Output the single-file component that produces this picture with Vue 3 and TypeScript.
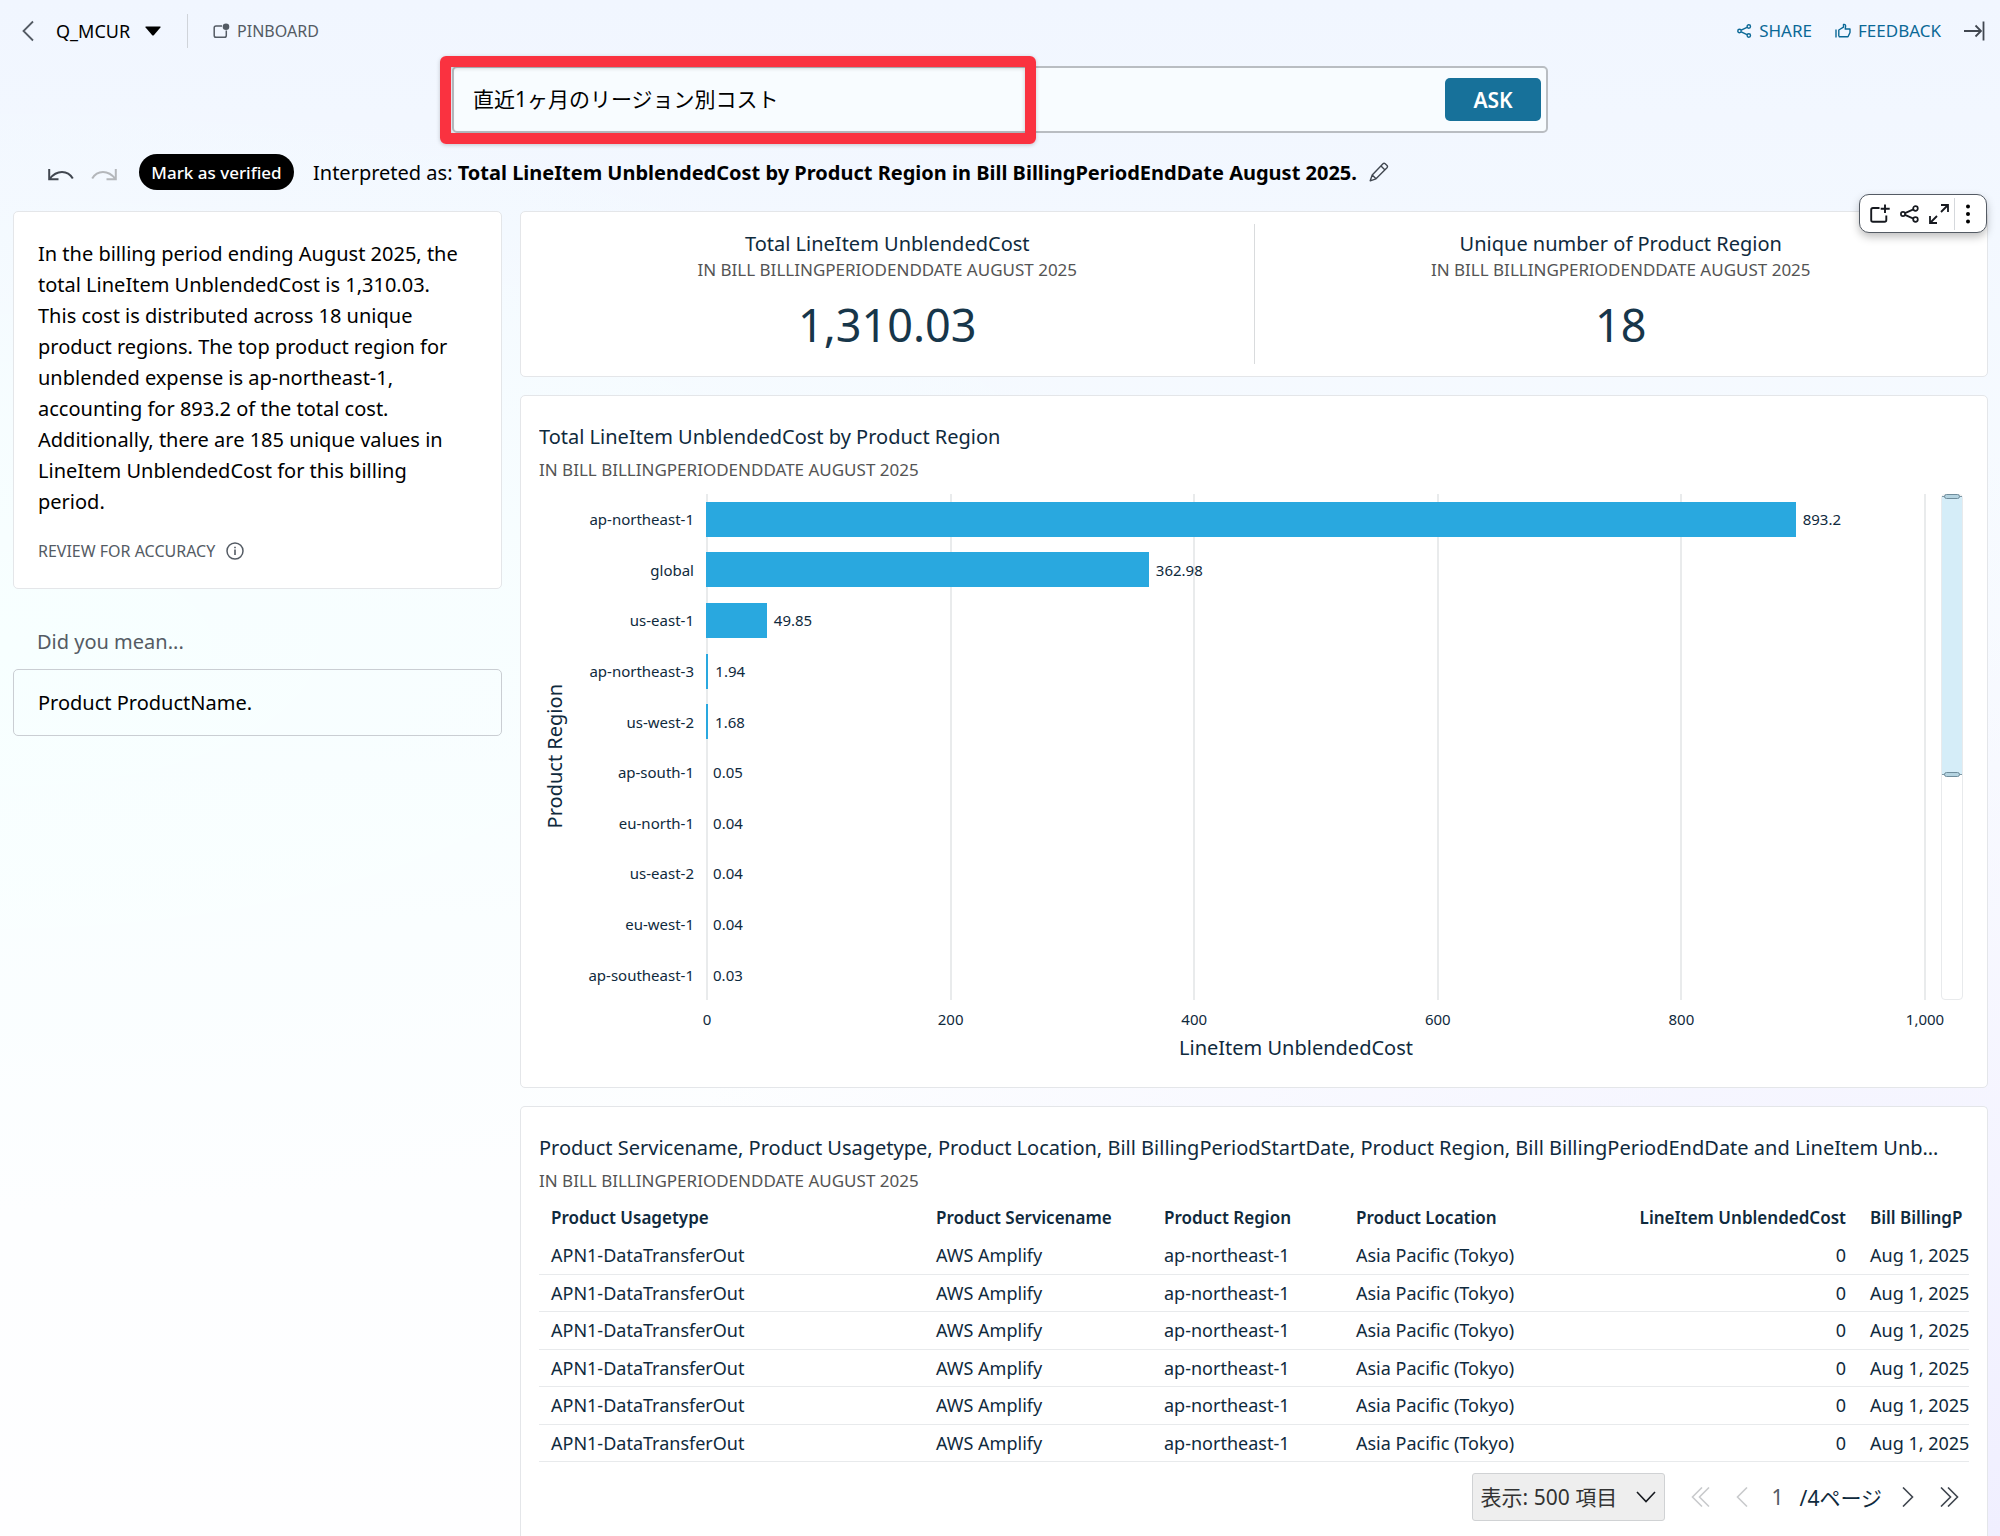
<script setup lang="ts">
import { ref } from 'vue'

interface Bar {
  region: string
  value: number
}

interface UsageRow {
  id: number
  usageType: string
  service: string
  region: string
  location: string
  cost: string
  start: string
}

const question = ref('直近1ヶ月のリージョン別コスト')
const pageSize = ref('500')
const period = 'IN BILL BILLINGPERIODENDDATE AUGUST 2025'

const kpis = [
  { title: 'Total LineItem UnblendedCost', value: '1,310.03' },
  { title: 'Unique number of Product Region', value: '18' },
]

const bars: Bar[] = [
  { region: 'ap-northeast-1', value: 893.2 },
  { region: 'global', value: 362.98 },
  { region: 'us-east-1', value: 49.85 },
  { region: 'ap-northeast-3', value: 1.94 },
  { region: 'us-west-2', value: 1.68 },
  { region: 'ap-south-1', value: 0.05 },
  { region: 'eu-north-1', value: 0.04 },
  { region: 'us-east-2', value: 0.04 },
  { region: 'eu-west-1', value: 0.04 },
  { region: 'ap-southeast-1', value: 0.03 },
]
const axisMax = 1000
const ticks = ['0', '200', '400', '600', '800', '1,000']

const rows: UsageRow[] = Array.from({ length: 6 }, (_, id) => ({
  id,
  usageType: 'APN1-DataTransferOut',
  service: 'AWS Amplify',
  region: 'ap-northeast-1',
  location: 'Asia Pacific (Tokyo)',
  cost: '0',
  start: 'Aug 1, 2025',
}))

const barWidth = (value: number): string => `${(value / axisMax) * 100}%`
</script>

<template>
  <div class="page">
    <header class="topbar">
      <button class="icon-btn back" type="button" aria-label="Back">
        <svg width="12" height="22" viewBox="0 0 12 22"><path d="M11 1.500 1.500 11 11 20.500" fill="none" stroke="#545b64" stroke-width="1.800" /></svg>
      </button>
      <button class="topic" type="button">
        Q_MCUR
        <svg width="16" height="10" viewBox="0 0 16 10"><path d="M1 .5h14q1 .2.400 1L9 9q-1 1-2 0L.6 1.500Q0 .7 1 .5z" fill="#000" /></svg>
      </button>
      <span class="divider"></span>
      <button class="pinboard" type="button">
        <svg width="17" height="16" viewBox="0 0 17 16">
          <path d="M9 3H3Q1.200 3 1.200 4.800v7.700q0 1.800 1.800 1.800h8.500q1.800 0 1.800-1.800V7.500" fill="none" stroke="#545b64" stroke-width="1.500" />
          <circle cx="13" cy="3.700" r="3.300" fill="#545b64" />
        </svg>
        PINBOARD
      </button>
      <nav class="actions">
        <a href="#share">
          <svg width="15" height="14" viewBox="0 0 15 14" fill="none" stroke="#0a6896" stroke-width="1.400">
            <circle cx="2.500" cy="7" r="1.700" /><circle cx="11.800" cy="2.500" r="1.700" /><circle cx="11.800" cy="11.500" r="1.700" />
            <path d="M4.200 6.200 10 3.300M4.200 7.800l5.800 2.900" />
          </svg>
          SHARE
        </a>
        <a href="#feedback">
          <svg width="16" height="15" viewBox="0 0 16 15" fill="none" stroke="#0a6896" stroke-width="1.400">
            <path d="M1 6.500v8M3.800 13.500V7L8.500 4.200V1.500Q10.800 1 10.600 3.500L10.200 6H15v3.500l-2 4.200H3.800" stroke-linejoin="round" />
          </svg>
          FEEDBACK
        </a>
        <button class="icon-btn" type="button" aria-label="Collapse panel">
          <svg width="21" height="20" viewBox="0 0 21 20" fill="none" stroke="#414750" stroke-width="1.800"><path d="M0 10h17M11.500 4.500 17 10l-5.500 5.500M19.500 .5v19" /></svg>
        </button>
      </nav>
    </header>

    <form class="search" @submit.prevent>
      <input v-model="question" type="text" aria-label="Ask a question" />
      <button class="ask" type="submit">ASK</button>
      <span class="highlight"></span>
    </form>

    <section class="interpreted">
      <button class="icon-btn undo" type="button" aria-label="Undo">
        <svg width="26" height="12" viewBox="0 0 26 12" fill="none" stroke="#414750" stroke-width="2"><path d="M1.200 0v10.300H10.500M1.500 10Q7 3 14 3 21 3 24.800 9.500" /></svg>
      </button>
      <button class="icon-btn redo" type="button" aria-label="Redo" disabled>
        <svg width="26" height="12" viewBox="0 0 26 12" fill="none" stroke="#b4b7bb" stroke-width="2"><path d="M24.800 0v10.300H15.500M24.500 10Q19 3 12 3 5 3 1.200 9.500" /></svg>
      </button>
      <button class="verify" type="button">Mark as verified</button>
      <p>Interpreted as: <b>Total LineItem UnblendedCost by Product Region in Bill BillingPeriodEndDate August 2025.</b></p>
      <button class="icon-btn edit" type="button" aria-label="Edit interpretation">
        <svg width="20" height="20" viewBox="0 0 20 20" fill="none" stroke="#414750" stroke-width="1.400" stroke-linejoin="round"><path d="M1.200 18.800 3.200 13 14 1.800Q15 .8 16.200 1.800L18 3.500Q19 4.600 18 5.800L7 16.800zM3.200 13 7 16.800M12 4l4 4" /></svg>
      </button>
    </section>

    <div class="content">
      <aside class="side">
        <article class="card summary">
          <p>In the billing period ending August 2025, the total LineItem UnblendedCost is 1,310.03. This cost is distributed across 18 unique product regions. The top product region for unblended expense is ap-northeast-1, accounting for 893.2 of the total cost. Additionally, there are 185 unique values in LineItem UnblendedCost for this billing period.</p>
          <div class="review">
            REVIEW FOR ACCURACY
            <svg width="18" height="18" viewBox="0 0 18 18"><circle cx="9" cy="9" r="8" fill="none" stroke="#545b64" stroke-width="1.500" /><path d="M9 7.500V13M9 4.800v1.500" stroke="#545b64" stroke-width="1.600" /></svg>
          </div>
        </article>
        <h2>Did you mean...</h2>
        <button class="suggestion" type="button">Product ProductName.</button>
      </aside>

      <main class="main">
        <section class="card kpis">
          <div v-for="kpi in kpis" :key="kpi.title" class="kpi">
            <h3>{{ kpi.title }}</h3>
            <p class="period">{{ period }}</p>
            <strong>{{ kpi.value }}</strong>
          </div>
          <div class="toolbar">
            <button class="icon-btn" type="button" aria-label="Add to pinboard">
              <svg width="20" height="20" viewBox="0 0 20 20" fill="none" stroke="#16191f" stroke-width="1.900"><path d="M9.500 4H3Q1.200 4 1.200 5.800V16q0 1.800 1.800 1.800h11.500q1.800 0 1.800-1.800v-4.500M15 .5v8.500M10.700 4.800h9" /></svg>
            </button>
            <button class="icon-btn" type="button" aria-label="Share visual">
              <svg width="19" height="18" viewBox="0 0 19 18" fill="none" stroke="#16191f" stroke-width="1.700">
                <circle cx="3" cy="9" r="2.100" /><circle cx="15.500" cy="3.500" r="2.300" /><circle cx="15.500" cy="14.500" r="2.300" /><path d="m5 8.100 8.400-3.700M5 9.900l8.400 3.700" />
              </svg>
            </button>
            <button class="icon-btn" type="button" aria-label="Expand visual">
              <svg width="20" height="20" viewBox="0 0 20 20" fill="none" stroke="#16191f" stroke-width="1.800"><path d="M12 8l7-7M12 1h7v7M8 12l-7 7M1 12v7h7" /></svg>
            </button>
            <span class="tool-divider"></span>
            <button class="icon-btn" type="button" aria-label="More options">
              <svg width="6" height="20" viewBox="0 0 6 20"><circle cx="3" cy="2.500" r="2" /><circle cx="3" cy="10" r="2" /><circle cx="3" cy="17.500" r="2" /></svg>
            </button>
          </div>
        </section>

        <section class="card panel chart-card">
          <h3>Total LineItem UnblendedCost by Product Region</h3>
          <p class="period">{{ period }}</p>
          <div class="chart">
            <div class="y-title"><span>Product Region</span></div>
            <div class="labels"><span v-for="b in bars" :key="b.region">{{ b.region }}</span></div>
            <div class="gridlines"><i v-for="t in ticks" :key="t"></i></div>
            <div class="bars">
              <div v-for="b in bars" :key="b.region" class="bar-row">
                <span class="bar" :style="{ width: barWidth(b.value) }"></span>
                <span class="value">{{ b.value }}</span>
              </div>
            </div>
            <div class="scroller">
              <span class="window">
                <i class="handle"></i>
                <i class="handle"></i>
              </span>
            </div>
            <div class="ticks"><span v-for="t in ticks" :key="t">{{ t }}</span></div>
            <div class="x-title">LineItem UnblendedCost</div>
          </div>
        </section>

        <section class="card panel table-card">
          <h3>Product Servicename, Product Usagetype, Product Location, Bill BillingPeriodStartDate, Product Region, Bill BillingPeriodEndDate and LineItem Unb…</h3>
          <p class="period">{{ period }}</p>
          <table>
            <colgroup>
              <col class="c-usage" /><col class="c-service" /><col class="c-region" /><col class="c-location" /><col /><col class="c-start" />
            </colgroup>
            <thead>
              <tr>
                <th>Product Usagetype</th>
                <th>Product Servicename</th>
                <th>Product Region</th>
                <th>Product Location</th>
                <th class="num">LineItem UnblendedCost</th>
                <th>Bill BillingP</th>
              </tr>
            </thead>
            <tbody>
              <tr v-for="r in rows" :key="r.id">
                <td>{{ r.usageType }}</td>
                <td>{{ r.service }}</td>
                <td>{{ r.region }}</td>
                <td>{{ r.location }}</td>
                <td class="num">{{ r.cost }}</td>
                <td>{{ r.start }}</td>
              </tr>
            </tbody>
          </table>
          <footer class="pager">
            <div class="select">
              <select v-model="pageSize" aria-label="表示件数">
                <option value="500">表示: 500 項目</option>
              </select>
              <svg width="20" height="12" viewBox="0 0 20 12"><path d="m1 1 9 9.500L19 1" fill="none" stroke="#16191f" stroke-width="1.600" /></svg>
            </div>
            <button class="icon-btn first" type="button" aria-label="First page" disabled>
              <svg width="19" height="20" viewBox="0 0 19 20" fill="none" stroke="#c9cbcd" stroke-width="1.600"><path d="M11 .5 1.500 10l9.500 9.500M18 .5 8.500 10l9.500 9.500" /></svg>
            </button>
            <button class="icon-btn prev" type="button" aria-label="Previous page" disabled>
              <svg width="12" height="20" viewBox="0 0 12 20" fill="none" stroke="#c9cbcd" stroke-width="1.600"><path d="M11 .5 1.500 10l9.500 9.500" /></svg>
            </button>
            <span class="current">1</span>
            <span class="total">/4ページ</span>
            <button class="icon-btn next" type="button" aria-label="Next page">
              <svg width="12" height="20" viewBox="0 0 12 20" fill="none" stroke="#414750" stroke-width="1.600"><path d="m1 .5 9.500 9.500L1 19.500" /></svg>
            </button>
            <button class="icon-btn" type="button" aria-label="Last page">
              <svg width="19" height="20" viewBox="0 0 19 20" fill="none" stroke="#414750" stroke-width="1.600"><path d="m1 .5 9.500 9.500L1 19.500M8 .5l9.500 9.500L8 19.500" /></svg>
            </button>
          </footer>
        </section>
      </main>
    </div>
  </div>
</template>

<style>
body {
  margin: 0;
  overflow: hidden;
}
</style>

<style scoped>
* {
  box-sizing: border-box;
}

.page {
  display: flex;
  flex-direction: column;
  height: 100vh;
  overflow: hidden;
  color: #000;
  font-family: "Noto Sans", "Noto Sans CJK JP", sans-serif;
  font-size: 20px;
  background:
    radial-gradient(ellipse at 0% 42%, #f7ffff 0%, rgba(247, 255, 255, 0) 45%),
    radial-gradient(ellipse at 100% 100%, #f0efff 0%, rgba(243, 242, 255, 0) 50%),
    linear-gradient(180deg, #f1f6ff 0%, #f3f8ff 15%, #f8fcff 40%, #fcfeff 60%, #fefeff 100%);
}

button,
input,
select {
  margin: 0;
  font: inherit;
  color: inherit;
}

h2,
h3,
p {
  margin: 0;
  font-weight: 400;
}

svg {
  display: block;
  flex: none;
}

.icon-btn {
  display: flex;
  padding: 0;
  border: 0;
  background: none;
}

.topbar {
  display: flex;
  flex: none;
  align-items: center;
  height: 61px;
  padding: 0 15px 0 22px;
}

.topic,
.pinboard {
  display: flex;
  align-items: center;
  padding: 0;
  border: 0;
  background: none;
}

.topic {
  gap: 15px;
  margin-left: 22px;
  font-size: 18px;
}

.divider {
  width: 1px;
  height: 34px;
  margin: 0 25px 0 26px;
  background: #d0d4da;
}

.pinboard {
  gap: 7px;
  color: #545b64;
  font-size: 16px;
}

.actions {
  display: flex;
  align-items: center;
  gap: 23px;
  margin-left: auto;
}

.actions a {
  display: flex;
  align-items: center;
  gap: 7px;
  color: #0a6896;
  font-size: 17px;
  text-decoration: none;
}

.search {
  position: relative;
  display: flex;
  flex: none;
  align-items: center;
  align-self: center;
  width: 1096px;
  max-width: 90%;
  height: 67px;
  margin-top: 5px;
  padding: 0 5px 0 19px;
  border: 2px solid #b9bdc2;
  border-radius: 5px;
  background: #f8fcff;
}

.search input {
  flex: 1;
  min-width: 0;
  padding: 0 0 4px;
  border: 0;
  outline: 0;
  background: none;
  font-size: 21px;
}

.ask {
  width: 96px;
  height: 43px;
  padding: 0;
  border: 0;
  border-radius: 5px;
  background: #17719a;
  color: #fff;
  font-weight: 600;
  font-size: 21px;
}

.highlight {
  position: absolute;
  top: -12px;
  left: -14px;
  width: 596px;
  height: 88px;
  border: 11px solid #fa3240;
  border-radius: 6px;
  box-shadow: 0 1px 4px rgba(0, 0, 0, 0.2), inset 0 1px 4px rgba(0, 0, 0, 0.2);
  pointer-events: none;
}

.interpreted {
  display: flex;
  flex: none;
  align-items: center;
  height: 78px;
  padding: 0 48px;
}

.undo,
.redo {
  margin-top: 6px;
}

.redo {
  margin-left: 17px;
}

.verify {
  width: 155px;
  height: 36px;
  margin: 0 19px 0 22px;
  padding: 0;
  border: 0;
  border-radius: 18px;
  background: #000;
  color: #fff;
  font-weight: 500;
  font-size: 17px;
}

.edit {
  margin-left: 12px;
}

.content {
  display: flex;
  flex: 1;
  gap: 18px;
  min-height: 0;
  padding: 0 12px 0 13px;
}

.side {
  flex: none;
  width: 489px;
}

.card {
  border: 1px solid #e4e6e9;
  border-radius: 5px;
  background: #fff;
}

.summary {
  height: 378px;
  padding: 26px 36px 0 24px;
}

.summary p {
  line-height: 31px;
}

.review {
  display: flex;
  align-items: center;
  gap: 11px;
  margin-top: 24px;
  color: #545b64;
  font-size: 16px;
  line-height: 20px;
}

.side h2 {
  padding: 38px 24px 13px;
  color: #545b64;
  font-size: 20px;
  line-height: 29px;
}

.suggestion {
  width: 100%;
  height: 67px;
  padding: 0 24px;
  border: 1px solid #caced3;
  border-radius: 5px;
  background: none;
  text-align: left;
}

.main {
  display: flex;
  flex: 1;
  flex-direction: column;
  gap: 18px;
  min-width: 0;
}

h3 {
  color: #0f2a3d;
  font-size: 20px;
  line-height: 28px;
}

.period {
  color: #545454;
  font-size: 17px;
  line-height: 24px;
}

.kpis {
  position: relative;
  display: flex;
  flex: none;
  height: 166px;
  padding: 12px 0;
}

.kpi {
  display: flex;
  flex: 1;
  flex-direction: column;
  align-items: center;
  padding-top: 6px;
}

.kpi + .kpi {
  border-left: 1px solid #d9dbdd;
}

.kpi strong {
  margin-top: 13px;
  color: #17364a;
  font-weight: 400;
  font-size: 45px;
  line-height: 60px;
}

.toolbar {
  position: absolute;
  top: -18px;
  right: 0;
  display: flex;
  align-items: center;
  gap: 10px;
  height: 39px;
  padding: 0 15px 0 10px;
  border: 1px solid #545b64;
  border-radius: 10px;
  background: #fff;
  box-shadow: 0 4px 8px rgba(0, 0, 0, 0.25);
}

.tool-divider {
  width: 1px;
  height: 32px;
  margin-left: -5px;
  background: #d5d8dc;
}

.panel {
  padding: 27px 18px 0;
}

.panel h3 {
  overflow: hidden;
  text-overflow: ellipsis;
  white-space: nowrap;
}

.panel .period {
  margin-top: 7px;
}

.chart-card {
  flex: none;
  height: 693px;
}

.chart {
  display: grid;
  grid-template-columns: 30px 137px 1fr 37px;
  grid-template-rows: 506px 36px 24px;
  margin: 12px 6px 0 0;
  color: #0f2a3d;
  font-size: 15px;
}

.y-title {
  display: flex;
  grid-area: 1 / 1 / 2 / 2;
  align-items: center;
  justify-content: center;
  padding-top: 18px;
  font-size: 20px;
}

.y-title span {
  writing-mode: vertical-rl;
  transform: rotate(180deg);
}

.labels,
.bars {
  display: grid;
  grid-template-rows: repeat(10, 1fr);
  align-items: center;
}

.labels {
  grid-area: 1 / 2 / 2 / 3;
  padding-right: 12px;
  text-align: right;
}

.bars {
  grid-area: 1 / 3 / 2 / 4;
}

.gridlines {
  display: flex;
  grid-area: 1 / 3 / 2 / 4;
  justify-content: space-between;
}

.gridlines i {
  width: 2px;
  background: #e9ebec;
}

.bar-row {
  display: flex;
  align-items: center;
}

.bar {
  height: 35px;
  background: #29a8df;
}

.value {
  margin-left: 7px;
}

.scroller {
  grid-area: 1 / 4 / 2 / 5;
  margin-left: 15px;
  padding-top: 1px;
  border: 1px solid #e8eaec;
  border-radius: 4px;
}

.window {
  display: flex;
  flex-direction: column;
  justify-content: space-between;
  height: 279px;
  border-top: 1px solid #7f99a6;
  border-bottom: 1px solid #7f99a6;
  background: #d5edf8;
}

.handle {
  align-self: center;
  width: 16px;
  height: 5px;
  margin: -3px 0;
  border: 1px solid #6f8d9c;
  border-radius: 3px;
  background: #b4d3e0;
}

.ticks {
  display: flex;
  grid-area: 2 / 3 / 3 / 4;
  justify-content: space-between;
  padding-top: 9px;
}

.ticks span {
  display: flex;
  justify-content: center;
  width: 2px;
}

.x-title {
  grid-area: 3 / 3 / 4 / 4;
  padding-right: 40px;
  font-size: 20px;
  line-height: 24px;
  text-align: center;
}

.table-card {
  flex: 1;
  min-height: 0;
  border-bottom: 0;
  border-radius: 5px 5px 0 0;
}

table {
  width: 100%;
  margin-top: 7px;
  border-collapse: collapse;
  table-layout: fixed;
  color: #0f2a3d;
  line-height: 24px;
}

.c-usage {
  width: 385px;
}

.c-service {
  width: 228px;
}

.c-region {
  width: 192px;
}

.c-location {
  width: 240px;
}

.c-start {
  width: 111px;
}

th,
td {
  padding: 0 0 0 12px;
  font-size: 18px;
  text-align: left;
  white-space: nowrap;
}

th {
  height: 36px;
  font-weight: 600;
  font-size: 17px;
}

td {
  height: 38px;
  border-bottom: 1px solid #e8eaec;
}

tr:nth-child(even) td {
  height: 37px;
}

.num {
  padding-right: 12px;
  text-align: right;
}

.pager {
  display: flex;
  align-items: center;
  justify-content: flex-end;
  margin-top: 11px;
  padding-right: 10px;
}

.select {
  display: flex;
  position: relative;
  align-items: center;
  margin-right: 26px;
}

.select select {
  width: 193px;
  height: 48px;
  padding: 0 8px;
  border: 1px solid #d0d2d4;
  border-radius: 3px;
  background: #eee;
  color: #333;
  font-size: 21px;
  appearance: none;
}

.select svg {
  position: absolute;
  right: 9px;
  pointer-events: none;
}

.first {
  margin-right: 26px;
}

.current {
  margin: 0 16px 0 24px;
  color: #545b64;
  font-size: 21px;
}

.total {
  color: #0f2a3d;
  font-size: 21px;
}

.next {
  margin: 0 26px 0 20px;
}
</style>
